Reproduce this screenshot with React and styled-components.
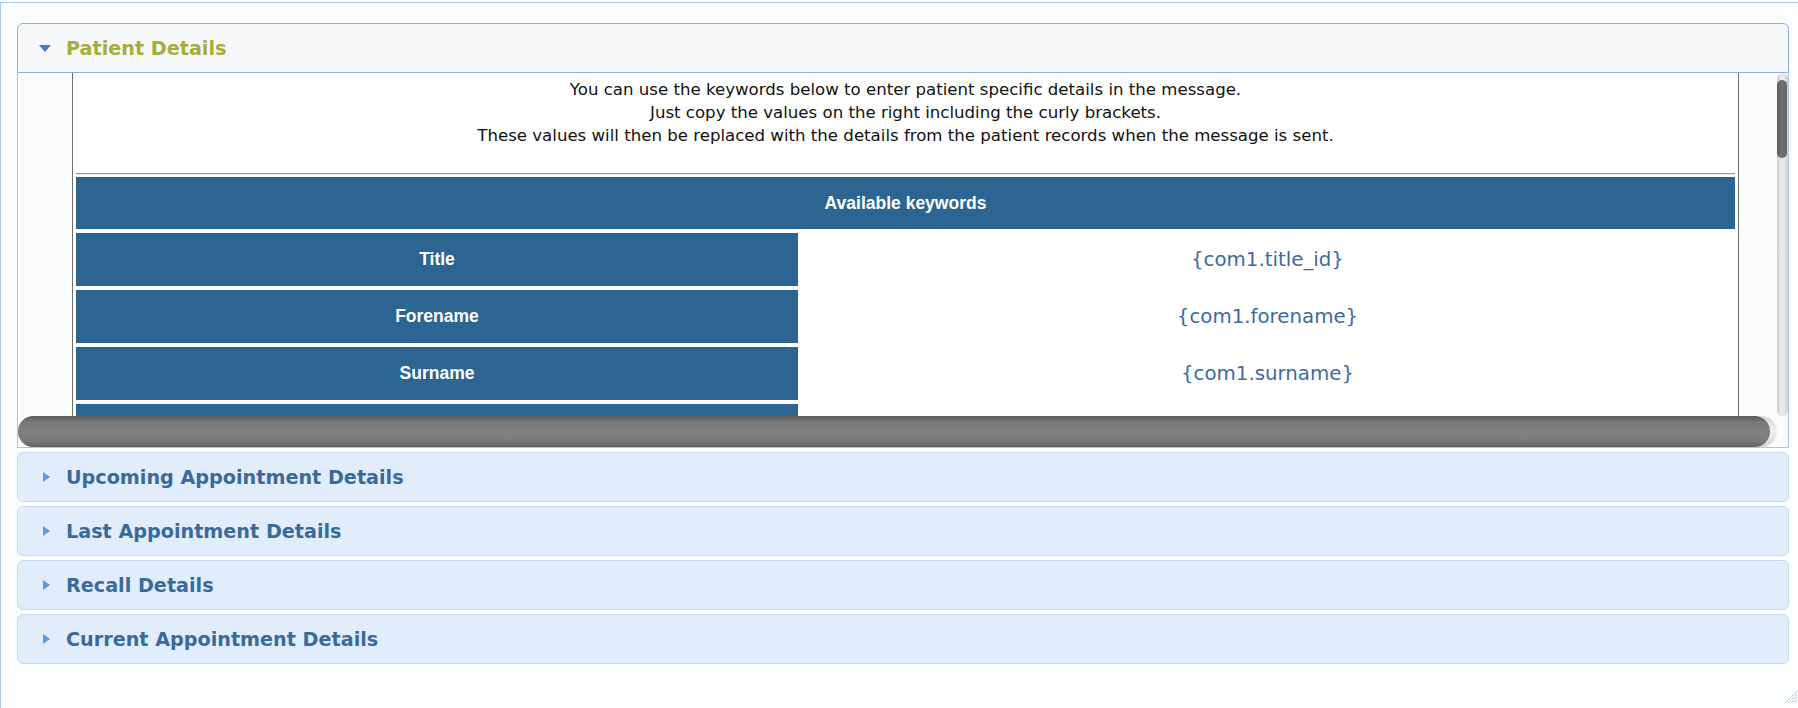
import React from 'react';
import styled, { createGlobalStyle } from 'styled-components';

const GlobalStyle = createGlobalStyle`
  html, body {
    margin: 0;
    padding: 0;
    background: #fcfdfd;
    overflow: hidden;
  }
  body {
    font-family: "DejaVu Sans", "Liberation Sans", sans-serif;
  }
`;

const Frame = styled.div`
  position: relative;
  box-sizing: border-box;
  height: 706px;
  margin-top: 2px;
  border-top: 1px solid #a9c8e8;
  border-left: 1px solid #a9c8e8;
  padding: 20px 9px 0 16px;
`;

const Accordion = styled.div`
  display: flex;
  flex-direction: column;
  gap: 4px;
`;

const Section = styled.div`
  display: flex;
  flex-direction: column;
`;

const Header = styled.div`
  display: flex;
  align-items: center;
  gap: 15px;
  box-sizing: border-box;
  height: 50px;
  padding-left: 21px;
  border: 1px solid ${p => (p.$active ? '#86b3e2' : '#c6daf0')};
  border-radius: ${p => (p.$active ? '6px 6px 0 0' : '6px')};
  background: ${p => (p.$active ? '#f6f7f9' : '#e1edfb')};
  color: ${p => (p.$active ? '#a7ae38' : '#3a6a9c')};
  font-family: "DejaVu Sans", sans-serif;
  font-weight: bold;
  font-size: 19.2px;
  cursor: pointer;
`;

const Arrow = styled.svg`
  flex: none;
  width: 12px;
  height: 12px;
`;

const Body = styled.div`
  box-sizing: border-box;
  height: 375px;
  display: grid;
  grid-template-columns: 1fr 11px;
  grid-template-rows: 1fr 31px;
  border: 1px solid #a8c6e6;
  border-top: none;
  background: #fbfdfd;
`;

const Viewport = styled.div`
  overflow: hidden;
  min-width: 0;
  min-height: 0;
`;

const VTrack = styled.div`
  display: flex;
  flex-direction: column;
  padding-top: 7px;
  border-radius: 6px;
  background: linear-gradient(to right, #cdcdcd, #ececec 40%, #e4e4e4 70%, #cdcdcd);
`;

const VThumb = styled.div`
  height: 78px;
  margin: 0 1px 0 0;
  border-radius: 6px;
  background: linear-gradient(to right, #5e5e5e, #727272 50%, #666);
`;

const HTrack = styled.div`
  display: flex;
  border-radius: 16px;
  background: linear-gradient(#d6d6d6, #f0f0f0 50%, #d6d6d6);
`;

const HThumb = styled.div`
  flex: 1;
  margin-right: 7px;
  border-radius: 16px;
  background: linear-gradient(#595959, #787878 20%, #828282 55%, #7a7a7a 80%, #636363);
`;

const Sheet = styled.div`
  padding: 0 38px 0 54px;
`;

const Card = styled.div`
  border-left: 1px solid #6e6e6e;
  border-right: 1px solid #6e6e6e;
  background: #fff;
  padding: 5px 3px 24px 3px;
`;

const Intro = styled.p`
  margin: 0;
  text-align: center;
  font-family: "DejaVu Sans", sans-serif;
  font-size: 16.6px;
  line-height: 23px;
  color: #111;
`;

const Divider = styled.hr`
  height: 0;
  margin: 26px 0 2px;
  border: none;
  border-top: 1px solid #979797;
  border-bottom: 1px solid #e4e4e4;
`;

const KeywordGrid = styled.div`
  display: grid;
  grid-template-columns: 722px 1fr;
  gap: 4px 2px;
`;

const GridHead = styled.div`
  grid-column: 1 / -1;
  height: 52px;
  display: flex;
  align-items: center;
  justify-content: center;
  background: #2c6591;
  color: #fff;
  font-family: "Liberation Sans", Arial, sans-serif;
  font-weight: bold;
  font-size: 17.5px;
`;

const KeyCell = styled.div`
  height: 53px;
  display: flex;
  align-items: center;
  justify-content: center;
  background: #2c6591;
  color: #fff;
  font-family: "Liberation Sans", Arial, sans-serif;
  font-weight: bold;
  font-size: 17.5px;
`;

const ValueCell = styled.div`
  height: 53px;
  display: flex;
  align-items: center;
  justify-content: center;
  background: #fff;
  color: #3b6b9c;
  font-family: "DejaVu Sans", sans-serif;
  font-size: 19.8px;
`;

const Grip = styled.svg`
  position: absolute;
  right: 1px;
  bottom: 5px;
  width: 12px;
  height: 13px;
`;

const keywords = [
  ['Title', '{com1.title_id}'],
  ['Forename', '{com1.forename}'],
  ['Surname', '{com1.surname}'],
  ['Known As', '{com1.known_as}'],
  ['Date of Birth', '{com1.dob}'],
  ['Age', '{com1.age}'],
  ['Gender', '{com1.gender}'],
  ['Address Line 1', '{com1.address1}'],
  ['Address Line 2', '{com1.address2}'],
  ['Town', '{com1.town}'],
  ['Postcode', '{com1.postcode}'],
  ['Mobile Phone', '{com1.mobile}'],
  ['Email', '{com1.email}'],
];

const sections = [
  'Upcoming Appointment Details',
  'Last Appointment Details',
  'Recall Details',
  'Current Appointment Details',
];

const ToggleArrow = ({ open }) => (
  <Arrow viewBox="0 0 12 12">
    {open ? (
      <polygon points="0,3 12,3 6,10" fill="#3d7dcc" />
    ) : (
      <polygon points="4,1 11,6 4,11" fill="#5b9be0" />
    )}
  </Arrow>
);

const App = () => (
  <>
    <GlobalStyle />
    <Frame>
      <Accordion>
        <Section>
          <Header $active>
            <ToggleArrow open />
            Patient Details
          </Header>
          <Body>
            <Viewport>
              <Sheet>
                <Card>
                  <Intro>
                    You can use the keywords below to enter patient specific details in the message.
                    <br />
                    Just copy the values on the right including the curly brackets.
                    <br />
                    These values will then be replaced with the details from the patient records when the message is sent.
                  </Intro>
                  <Divider />
                  <KeywordGrid>
                    <GridHead>Available keywords</GridHead>
                    {keywords.map(([label, value]) => (
                      <React.Fragment key={label}>
                        <KeyCell>{label}</KeyCell>
                        <ValueCell>{value}</ValueCell>
                      </React.Fragment>
                    ))}
                  </KeywordGrid>
                </Card>
              </Sheet>
            </Viewport>
            <VTrack>
              <VThumb />
            </VTrack>
            <HTrack>
              <HThumb />
            </HTrack>
          </Body>
        </Section>
        {sections.map(title => (
          <Header key={title}>
            <ToggleArrow />
            {title}
          </Header>
        ))}
      </Accordion>
      <Grip viewBox="0 0 12 13">
        <g stroke="#7ba5d8" strokeWidth="1" strokeDasharray="1 1">
          <line x1="12" y1="1" x2="0" y2="13" />
          <line x1="12" y1="4" x2="3" y2="13" />
          <line x1="12" y1="7" x2="6" y2="13" />
          <line x1="12" y1="10" x2="9" y2="13" />
        </g>
      </Grip>
    </Frame>
  </>
);

export default App;
